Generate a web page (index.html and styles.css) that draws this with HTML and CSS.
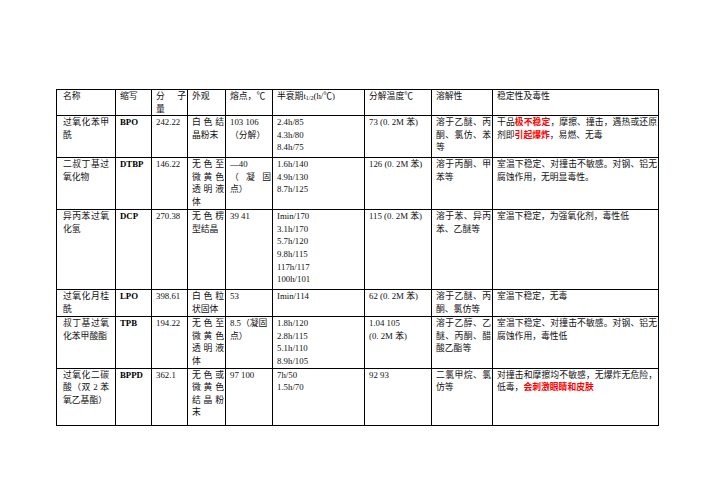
FILE: index.html
```html
<!DOCTYPE html>
<html lang="zh">
<head>
<meta charset="utf-8">
<title>引发剂性质表</title>
<link rel="stylesheet" href="styles.css">
</head>
<body>
<table class="grid">
  <colgroup>
    <col class="c1"><col class="c2"><col class="c3"><col class="c4"><col class="c5"><col class="c6"><col class="c7"><col class="c8"><col class="c9">
  </colgroup>
  <tr class="r-head">
    <td>名称</td>
    <td>缩写</td>
    <td>分 子 量</td>
    <td>外观</td>
    <td>熔点，℃</td>
    <td>半衰期t<sub>1/2</sub>(h/℃)</td>
    <td>分解温度℃</td>
    <td>溶解性</td>
    <td>稳定性及毒性</td>
  </tr>
  <tr class="r1">
    <td>过氧化苯甲酰</td>
    <td class="abbr">BPO</td>
    <td>242.22</td>
    <td>白色结晶粉末</td>
    <td class="nj">103 106<br>（分解）</td>
    <td class="nj">2.4h/85<br>4.3h/80<br>8.4h/75</td>
    <td class="nj">73 (0. 2M 苯)</td>
    <td>溶于乙醚、丙酮、氯仿、苯等</td>
    <td>干品<span class="warn">极不稳定</span>，摩擦、撞击，遇热或还原剂即<span class="warn">引起爆炸</span>，易燃、无毒</td>
  </tr>
  <tr class="r2">
    <td>二叔丁基过氧化物</td>
    <td class="abbr">DTBP</td>
    <td>146.22</td>
    <td>无色至微黄色透明液体</td>
    <td>—40<br>（凝固点）</td>
    <td class="nj">1.6h/140<br>4.9h/130<br>8.7h/125</td>
    <td class="nj">126 (0. 2M 苯)</td>
    <td>溶于丙酮、甲苯等</td>
    <td>室温下稳定、对撞击不敏感。对钢、铝无腐蚀作用，无明显毒性。</td>
  </tr>
  <tr class="r3">
    <td>异丙苯过氧化氢</td>
    <td class="abbr">DCP</td>
    <td>270.38</td>
    <td>无色楞型结晶</td>
    <td>39 41</td>
    <td class="nj">Imin/170<br>3.1h/170<br>5.7h/120<br>9.8h/115<br>117h/117<br>100h/101</td>
    <td class="nj">115 (0. 2M 苯)</td>
    <td>溶于苯、异丙苯、乙醚等</td>
    <td>室温下稳定，为强氧化剂，毒性低</td>
  </tr>
  <tr class="r4">
    <td>过氧化月桂酰</td>
    <td class="abbr">LPO</td>
    <td>398.61</td>
    <td>白色粒状固体</td>
    <td>53</td>
    <td class="nj">Imin/114</td>
    <td class="nj">62 (0. 2M 苯)</td>
    <td>溶于乙醚、丙酮、氯仿等</td>
    <td>室温下稳定，无毒</td>
  </tr>
  <tr class="r5">
    <td>叔丁基过氧化苯甲酸酯</td>
    <td class="abbr">TPB</td>
    <td>194.22</td>
    <td>无色至微黄色透明液体</td>
    <td class="nj">8.5（凝固点）</td>
    <td class="nj">1.8h/120<br>2.8h/115<br>5.1h/110<br>8.9h/105</td>
    <td class="nj">1.04 105<br>(0. 2M 苯)</td>
    <td>溶于乙醇、乙醚、丙酮、醋酸乙酯等</td>
    <td>室温下稳定、对撞击不敏感。对钢、铝无腐蚀作用，毒性低</td>
  </tr>
  <tr class="r6">
    <td>过氧化二碳酸（双 2 苯氧乙基酯）</td>
    <td class="abbr">BPPD</td>
    <td>362.1</td>
    <td>无色或微黄色结晶粉末</td>
    <td>97 100</td>
    <td class="nj">7h/50<br>1.5h/70</td>
    <td>92 93</td>
    <td>二氯甲烷、氯仿等</td>
    <td>对撞击和摩擦均不敏感，无爆炸无危险，低毒，<span class="warn">会刺激眼睛和皮肤</span></td>
  </tr>
</table>
</body>
</html>
```
FILE: styles.css
```css
html, body {
  margin: 0;
  padding: 0;
  background: #ffffff;
}

body {
  padding: 89px 0 0 56px;
  font-family: "Liberation Serif", "Noto Sans CJK SC", serif;
  font-size: 8.8px;
  line-height: 12.6px;
  color: #111;
  text-spacing-trim: space-all;
}

.grid {
  border-collapse: collapse;
  table-layout: fixed;
  width: 602px;
}

.c1 { width: 59px; }
.c2 { width: 36px; }
.c3 { width: 36px; }
.c4 { width: 38px; }
.c5 { width: 47px; }
.c6 { width: 92px; }
.c7 { width: 67px; }
.c8 { width: 61px; }
.c9 { width: 166px; }

.grid td {
  border: 1px solid #000;
  padding: 0 1px 0 4px;
  vertical-align: top;
  text-align: justify;
}

.grid td:first-child {
  padding: 0 6px 0 6px;
}

.grid td.nj {
  text-align: left;
}

.abbr {
  font-weight: bold;
  color: #000;
}

.warn {
  color: #ff0000;
  font-weight: bold;
}

sub {
  font-size: 6px;
  line-height: 0;
  vertical-align: -1px;
}

.r-head { height: 26px; }
.r1 { height: 42px; }
.r2 { height: 52px; }
.r3 { height: 80px; }
.r4 { height: 27px; }
.r5 { height: 51px; }
.r6 { height: 57px; }
```
